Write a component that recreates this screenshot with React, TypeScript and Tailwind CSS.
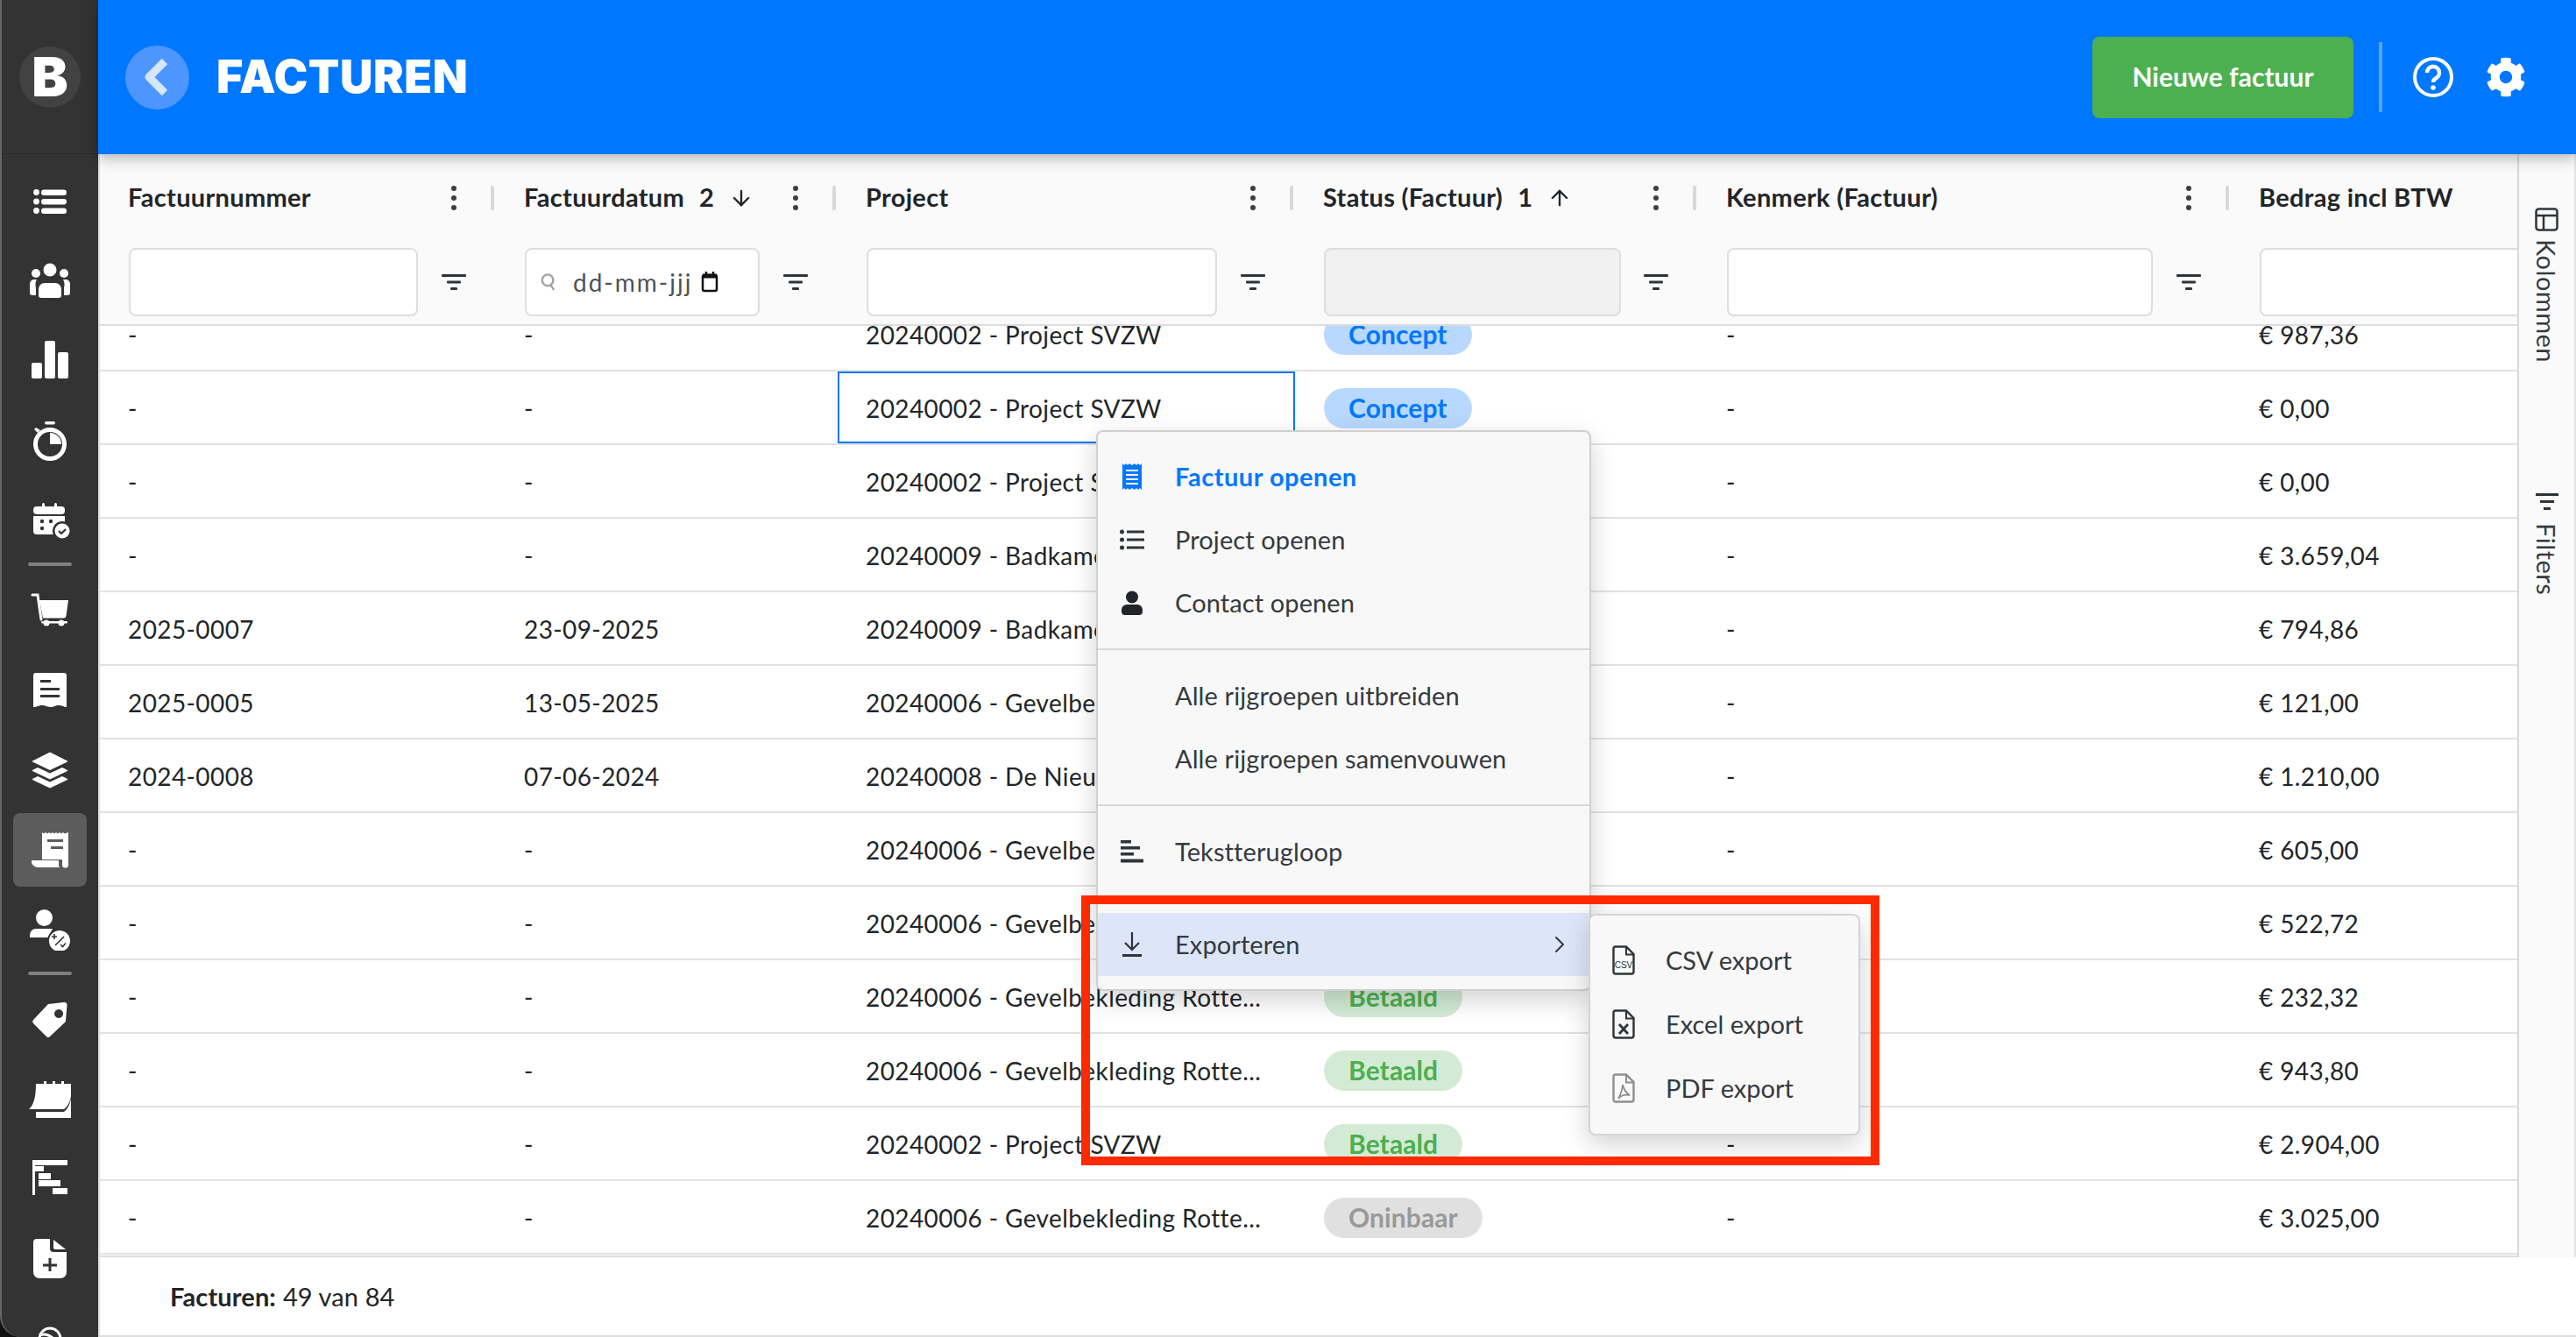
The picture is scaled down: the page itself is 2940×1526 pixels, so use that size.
import { ArrowDown, ChevronRight } from "lucide-react";
import { FaCog } from "react-icons/fa";
import type { ReactNode } from "react";

const DARK = "#333333";

// Sidebar icons, all on the same 48 box
const SideSvg = ({ children }: { children: ReactNode }) => (
  <svg viewBox="0 0 48 48" className="w-12 h-12" fill="#fff">
    {children}
  </svg>
);

const sideIcons: Record<string, ReactNode> = {
  list: (
    <>
      <circle cx="8.5" cy="13.5" r="3.4" />
      <circle cx="8.5" cy="24" r="3.4" />
      <circle cx="8.5" cy="34.5" r="3.4" />
      <rect x="14" y="10.5" width="29" height="6.5" rx="3.2" />
      <rect x="14" y="21" width="29" height="6.5" rx="3.2" />
      <rect x="14" y="31.5" width="29" height="6.5" rx="3.2" />
    </>
  ),
  people: (
    <>
      <circle cx="24" cy="11" r="7.5" />
      <circle cx="8" cy="15" r="5" />
      <circle cx="40" cy="15" r="5" />
      <path d="M11 40V33a7 7 0 0 1 7-7h12a7 7 0 0 1 7 7v7a3 3 0 0 1-3 3H14a3 3 0 0 1-3-3z" />
      <path d="M8 22H6a5 5 0 0 0-5 5v10a3 3 0 0 0 3 3h4V31a11 11 0 0 1 1-9z" />
      <path d="M40 22h2a5 5 0 0 1 5 5v10a3 3 0 0 1-3 3h-4V31a11 11 0 0 0-1-9z" />
    </>
  ),
  bars: (
    <>
      <rect x="3" y="26" width="12" height="18" rx="2" />
      <rect x="18" y="1" width="12" height="43" rx="2" />
      <rect x="33" y="14" width="12" height="30" rx="2" />
    </>
  ),
  timer: (
    <>
      <circle cx="24" cy="28" r="16.5" fill="none" stroke="#fff" strokeWidth="5" />
      <path d="M24 28V15a13 13 0 0 1 13 13z" />
      <rect x="18" y="2" width="12" height="3.5" rx="1.7" />
      <path d="M8 9l5 3-3 3-4-4z" />
    </>
  ),
  calendar: (
    <>
      <rect x="5" y="8" width="36" height="9" rx="4" />
      <path d="M5 19h36v21H9a4 4 0 0 1-4-4z" />
      <rect x="15" y="4" width="3" height="6" rx="1.5" />
      <rect x="29" y="4" width="3" height="6" rx="1.5" />
      <circle cx="15" cy="25" r="2.2" fill={DARK} />
      <circle cx="25" cy="25" r="2.2" fill={DARK} />
      <circle cx="15" cy="33" r="2.2" fill={DARK} />
      <circle cx="38" cy="36" r="11" fill={DARK} />
      <circle cx="38" cy="36" r="8.5" />
      <path d="M34 36l3 3 5-5" fill="none" stroke={DARK} strokeWidth="2.2" />
    </>
  ),
  cart: (
    <>
      <path d="M4 6h6l4 28" fill="none" stroke="#fff" strokeWidth="3" strokeLinecap="round" />
      <path d="M12 12h33l-2.500 18a3 3 0 0 1-3 2.500H16z" />
      <rect x="14" y="36" width="30" height="2.500" rx="1.200" />
      <circle cx="20" cy="38" r="3.500" />
      <circle cx="37" cy="38" r="3.500" />
    </>
  ),
  receipt: (
    <>
      <path d="M5 7a3 3 0 0 1 3-3h32a3 3 0 0 1 3 3v36c-3 0-5-2-9-2s-5 2-9 2-6-2-10-2-5 2-10 2z" />
      <rect x="13" y="12" width="12" height="3" fill={DARK} />
      <rect x="13" y="21" width="22" height="3" fill={DARK} />
      <rect x="13" y="29" width="22" height="3" fill={DARK} />
    </>
  ),
  layers: (
    <>
      <path d="M24 3.500l19 9.500a1 1 0 0 1 0 2l-19 9-19-9a1 1 0 0 1 0-2z" />
      <path d="M10 21l14 6.500L38 21l5 2.500a1 1 0 0 1 0 2L24 34.500l-19-9a1 1 0 0 1 0-2z" />
      <path d="M10 31l14 6.500L38 31l5 2.500a1 1 0 0 1 0 2L24 44.500l-19-9a1 1 0 0 1 0-2z" />
    </>
  ),
  invoice: (
    <>
      <path d="M15 4l2 1.500L19 4l2 1.500L23 4l2 1.500L27 4l2 1.500L31 4l2 1.500L35 4l2 1.500L39 4l2 1.500L45 4v37a3.500 3.500 0 0 1-7 0v-6H15z" />
      <rect x="21" y="12" width="18" height="3" fill="#5c5c5c" />
      <rect x="25" y="20" width="14" height="3" fill="#5c5c5c" />
      <path d="M3 36h31v6a4 4 0 0 0 1 2H10a7 7 0 0 1-7-8z" />
    </>
  ),
  user: (
    <>
      <circle cx="17.500" cy="10.500" r="9.500" />
      <path d="M1 33v-3a7 7 0 0 1 7-7h19l-5 10z" />
      <circle cx="35" cy="37" r="14" fill={DARK} />
      <circle cx="35" cy="37" r="12" />
      <path d="M26 32h6M29 29v6M30 42l10-10M36 41l2.500 2.500 3.500-4" fill="none" stroke={DARK} strokeWidth="1.600" />
    </>
  ),
  tag: (
    <path
      fillRule="evenodd"
      d="M22 6L40 4a3 3 0 0 1 3.500 3.500L42 25a3 3 0 0 1-1 2L24 43a3 3 0 0 1-4 0L5 28a3 3 0 0 1 0-4zM34 12a5 5 0 1 0 .1 0z"
    />
  ),
  peel: (
    <>
      <path d="M8 6H48V20C47 27 44 32 40 35H0C5 31 8 22 8 6z" />
      <path d="M48 23V45H8V38H40C44 35 47 29 48 23z" />
      <rect x="17" y="3" width="3" height="4" />
      <rect x="27" y="3" width="3" height="4" />
      <rect x="37" y="3" width="3" height="4" />
    </>
  ),
  gantt: (
    <>
      <rect x="4" y="2" width="40" height="6" />
      <rect x="4" y="2" width="3" height="40" />
      <rect x="7" y="9" width="10" height="6" />
      <rect x="11" y="17" width="14" height="7" />
      <rect x="11" y="25" width="25" height="7" />
      <rect x="27" y="34" width="17" height="7" />
    </>
  ),
  fileplus: (
    <>
      <path d="M9 1h15v11a4 4 0 0 0 4 4h15v23a7 7 0 0 1-7 7H12a7 7 0 0 1-7-7V5a4 4 0 0 1 4-4z" />
      <path d="M28 2l14 11H30a2 2 0 0 1-2-2z" />
      <path d="M24 23v15M16 31h16" stroke={DARK} strokeWidth="3" />
    </>
  ),
  swirl: (
    <g fill="none" stroke="#fff" strokeWidth="3">
      <circle cx="24" cy="24" r="12" />
      <path d="M12 20c8-3 17 1 20 12M14 29c5-2 10 0 12 6" />
    </g>
  ),
};

const SideItem = ({ name, active }: { name: string; active?: boolean }) => (
  <div className="h-[91px] flex items-center justify-center">
    <div className={`w-[84px] h-[84px] rounded-lg flex items-center justify-center ${active ? "bg-[#5c5c5c]" : ""}`}>
      <SideSvg>{sideIcons[name]}</SideSvg>
    </div>
  </div>
);

const SideSep = () => <div className="w-[50px] h-1 rounded-sm bg-[#808080] mx-auto mt-[3px] mb-[5px] shrink-0" />;

const Sidebar = () => (
  <aside className="w-[112px] shrink-0 h-full bg-[#333333] border-l-2 border-[#666] rounded-bl-[24px] flex flex-col overflow-hidden">
    <div className="h-[176px] shrink-0 flex items-center justify-center border-b border-[#2a2a2a]">
      <div className="w-[70px] h-[70px] rounded-full bg-[#424242] flex items-center justify-center text-white font-['Inter',sans-serif] font-black text-[62px] leading-none">
        B
      </div>
    </div>
    <div className="pt-[8px]">
      <SideItem name="list" />
      <SideItem name="people" />
      <SideItem name="bars" />
      <SideItem name="timer" />
      <SideItem name="calendar" />
      <SideSep />
      <SideItem name="cart" />
      <SideItem name="receipt" />
      <SideItem name="layers" />
      <SideItem name="invoice" active />
      <SideItem name="user" />
      <SideSep />
      <SideItem name="tag" />
      <SideItem name="peel" />
      <SideItem name="gantt" />
      <SideItem name="fileplus" />
      <SideItem name="swirl" />
    </div>
  </aside>
);

const Kebab = () => (
  <svg viewBox="0 0 8 28" className="w-2 h-7 shrink-0" fill="#3a3f44">
    <circle cx="4" cy="3" r="3" />
    <circle cx="4" cy="14" r="3" />
    <circle cx="4" cy="25" r="3" />
  </svg>
);

const FilterIcon = () => (
  <svg viewBox="0 0 28 18" className="w-7 h-[18px]" fill="#2f3438">
    <rect x="0" y="0" width="28" height="3" rx="1" />
    <rect x="6" y="7.500" width="16" height="3" rx="1" />
    <rect x="10" y="15" width="8" height="3" rx="1" />
  </svg>
);

type Col = {
  title: string;
  width: string;
  input: string;
  sort?: string;
  sortIcon?: "up" | "down";
  last?: boolean;
};

const columns: Col[] = [
  { title: "Factuurnummer", width: "w-[452px]", input: "w-[330px] bg-white" },
  { title: "Factuurdatum", width: "w-[390px]", input: "w-[268px] bg-white", sort: "2", sortIcon: "down" },
  { title: "Project", width: "w-[522px]", input: "w-[400px] bg-white" },
  { title: "Status (Factuur)", width: "w-[460px]", input: "w-[339px] bg-[#f0f1f0]", sort: "1", sortIcon: "up" },
  { title: "Kenmerk (Factuur)", width: "w-[608px]", input: "w-[486px] bg-white" },
  { title: "Bedrag incl BTW", width: "w-[327px]", input: "w-[400px] bg-white", last: true },
];

const HeaderCell = ({ col }: { col: Col }) => (
  <div className={`${col.width} shrink-0 flex flex-col`}>
    <div className="h-[100px] flex items-center pl-[32px]">
      <span className="font-bold text-[29px] text-[#212529] tracking-[0.3px] whitespace-nowrap pb-[3px]">{col.title}</span>
      {col.sort && <span className="font-bold text-[29px] text-[#212529] ml-[17px] pb-[3px]">{col.sort}</span>}
      {col.sortIcon === "down" && <ArrowDown className="w-7 h-7 ml-[17px] text-[#212529]" strokeWidth={2} />}
      {col.sortIcon === "up" && <ArrowDown className="w-7 h-7 ml-[17px] text-[#212529] rotate-180" strokeWidth={2} />}
      {!col.last && (
        <>
          <div className="ml-auto"><Kebab /></div>
          <div className="w-1 h-7 bg-[#d9d9d9] ml-[38px] mr-[2px]" />
        </>
      )}
    </div>
    <div className="h-[78px] mt-[7px] flex items-center pl-[33px] overflow-hidden">
      <div className={`${col.input} h-[78px] shrink-0 rounded-lg border-2 border-[#dedede] flex items-center pl-4`}>
        {col.title === "Factuurdatum" && (
          <>
            <svg viewBox="0 0 20 24" className="w-[18px] h-[22px] shrink-0" fill="none" stroke="#a0a0a0" strokeWidth="2.500">
              <circle cx="9" cy="9.500" r="7" />
              <path d="M13 16l4 6" />
            </svg>
            <span className="ml-[19px] text-[28px] text-[#4d5257] tracking-[2px] whitespace-nowrap">dd-mm-jjj</span>
            <svg viewBox="0 0 20 24" className="w-5 h-6 ml-[10px] shrink-0" fill="none" stroke="#111" strokeWidth="2.500">
              <rect x="2" y="4" width="16" height="18" rx="2" />
              <path d="M2 5h16" strokeWidth="5" />
              <path d="M6 0v4M14 0v4" />
            </svg>
          </>
        )}
      </div>
      {!col.last && (
        <div className="ml-auto mr-[34px]"><FilterIcon /></div>
      )}
    </div>
  </div>
);

const pillStyles: Record<string, string> = {
  Concept: "bg-[#b8d8ff] text-[#0077ff]",
  Betaald: "bg-[#d3ebd5] text-[#4caf50]",
  Oninbaar: "bg-[#e0e0e0] text-[#999999]",
};

const rows = [
  ["-", "-", "20240002 - Project SVZW", "Concept", "-", "€ 987,36"],
  ["-", "-", "20240002 - Project SVZW", "Concept", "-", "€ 0,00"],
  ["-", "-", "20240002 - Project SVZW", "Concept", "-", "€ 0,00"],
  ["-", "-", "20240009 - Badkamer Zuid", "Concept", "-", "€ 3.659,04"],
  ["2025-0007", "23-09-2025", "20240009 - Badkamer Zuid", "Betaald", "-", "€ 794,86"],
  ["2025-0005", "13-05-2025", "20240006 - Gevelbekleding Rotte...", "Betaald", "-", "€ 121,00"],
  ["2024-0008", "07-06-2024", "20240008 - De Nieuwe Haven", "Betaald", "-", "€ 1.210,00"],
  ["-", "-", "20240006 - Gevelbekleding Rotte...", "Betaald", "-", "€ 605,00"],
  ["-", "-", "20240006 - Gevelbekleding Rotte...", "Betaald", "-", "€ 522,72"],
  ["-", "-", "20240006 - Gevelbekleding Rotte...", "Betaald", "-", "€ 232,32"],
  ["-", "-", "20240006 - Gevelbekleding Rotte...", "Betaald", "-", "€ 943,80"],
  ["-", "-", "20240002 - Project SVZW", "Betaald", "-", "€ 2.904,00"],
  ["-", "-", "20240006 - Gevelbekleding Rotte...", "Oninbaar", "-", "€ 3.025,00"],
];

const Row = ({ cells, selected }: { cells: string[]; selected?: boolean }) => (
  <div className="h-[84px] shrink-0 flex border-b-2 border-[#e2e2e2] bg-white text-[28px] tracking-[0.4px] text-[#212529]">
    {cells.map((cell, i) => (
      <div
        key={i}
        className={`${columns[i].width} shrink-0 flex items-center whitespace-nowrap ${
          selected && i === 2 ? "border-2 border-[#0077ff] pl-[30px]" : "pl-[32px]"
        }`}
      >
        {i === 3 ? (
          <span className={`h-[46px] mt-[1px] ml-[1px] flex items-center px-[28px] rounded-full font-bold text-[30px] tracking-[0.1px] ${pillStyles[cell]}`}>{cell}</span>
        ) : (
          <span className="pt-[2px]">{cell}</span>
        )}
      </div>
    ))}
  </div>
);

const MenuItem = ({ icon, label, active, highlight, right }: { icon?: ReactNode; label: string; active?: boolean; highlight?: boolean; right?: ReactNode }) => (
  <div className={`h-[72px] flex items-center ${highlight ? "bg-[#dce6f8]" : ""}`}>
    <div className="w-[78px] mr-[10px] flex items-center justify-center shrink-0">{icon}</div>
    <span className={`text-[29px] ${active ? "font-bold text-[#0077ff] tracking-[0.5px]" : "text-[#343a40] tracking-[0.1px]"}`}>{label}</span>
    {right && <div className="ml-auto mr-[18px]">{right}</div>}
  </div>
);

const Divider = () => <div className="h-[2px] bg-[#d9d9d9] my-4" />;

const FileIcon = ({ children, color = "#2f3438" }: { children: ReactNode; color?: string }) => (
  <svg viewBox="0 0 26 34" className="w-[26px] h-[34px]" fill="none" stroke={color} strokeWidth="2.400">
    <path d="M3.500 1.500h12.500L24.500 10v20a2.500 2.500 0 0 1-2.500 2.500H4A2.500 2.500 0 0 1 1.500 30V3.500a2 2 0 0 1 2-2z" />
    <path d="M16 2v8.500h8" strokeWidth="2" />
    {children}
  </svg>
);

const ContextMenu = () => (
  <div className="absolute left-[1251px] top-[491px] w-[565px] h-[640px] z-20 rounded-lg border-2 border-[#cfcfcf] bg-[#f8f8f8] shadow-[0_10px_30px_rgba(0,0,0,0.18)] pt-[15px]">
    <MenuItem
      active
      label="Factuur openen"
      icon={
        <svg viewBox="0 0 22 30" className="w-[22px] h-[30px]" fill="#0077ff">
          <path d="M0 0l2 2 2-2 2 2 2-2 3 2 3-2 2 2 2-2 2 2 2-2v30l-2-2-2 2-2-2-2 2-3-2-3 2-2-2-2 2-2-2-2 2z" />
          <path d="M4 8h14M4 13h14M4 18h14M4 23h14" stroke="#f8f8f8" strokeWidth="2" />
        </svg>
      }
    />
    <MenuItem
      label="Project openen"
      icon={
        <svg viewBox="0 0 28 24" className="w-7 h-6" fill="#2f3438">
          <circle cx="2.500" cy="3" r="2.500" />
          <circle cx="2.500" cy="12" r="2.500" />
          <circle cx="2.500" cy="21" r="2.500" />
          <rect x="8" y="1.500" width="20" height="3" />
          <rect x="8" y="10.500" width="20" height="3" />
          <rect x="8" y="19.500" width="20" height="3" />
        </svg>
      }
    />
    <MenuItem
      label="Contact openen"
      icon={
        <svg viewBox="0 0 24 28" className="w-6 h-7" fill="#212529">
          <circle cx="12" cy="7.500" r="7" />
          <path d="M0 24v-2a6 6 0 0 1 6-6h12a6 6 0 0 1 6 6v2a4 4 0 0 1-4 4H4a4 4 0 0 1-4-4z" />
        </svg>
      }
    />
    <Divider />
    <MenuItem label="Alle rijgroepen uitbreiden" />
    <MenuItem label="Alle rijgroepen samenvouwen" />
    <Divider />
    <MenuItem
      label="Tekstterugloop"
      icon={
        <svg viewBox="0 0 26 26" className="w-[26px] h-[26px]" fill="#2f3438">
          <rect x="0" y="0" width="12" height="3.500" />
          <rect x="0" y="7" width="22" height="3.500" />
          <rect x="0" y="14" width="15" height="3.500" />
          <rect x="0" y="21.500" width="26" height="4" />
        </svg>
      }
    />
    <Divider />
    <MenuItem
      highlight
      label="Exporteren"
      icon={
        <svg viewBox="0 0 22 28" className="w-[22px] h-7" fill="none" stroke="#2f3438" strokeWidth="2.200">
          <path d="M11 0v20M3 12l8 8 8-8" />
          <path d="M0 26.500h22" strokeWidth="3" />
        </svg>
      }
      right={<ChevronRight className="w-8 h-8 text-[#343a40]" strokeWidth={1.5} />}
    />
  </div>
);

const SubMenu = () => (
  <div className="absolute left-[1813px] top-[1043px] w-[310px] h-[253px] z-30 rounded-lg border-2 border-[#d4d4d4] bg-[#f8f8f8] shadow-[0_10px_30px_rgba(0,0,0,0.18)] pt-[14px] flex flex-col">
    {[
      {
        label: "CSV export",
        icon: (
          <FileIcon>
            <text x="13" y="26" textAnchor="middle" fontSize="10" fontFamily="Liberation Sans" fill="#2f3438" stroke="none">CSV</text>
          </FileIcon>
        ),
      },
      {
        label: "Excel export",
        icon: (
          <FileIcon>
            <path d="M8 17l10 11M18 17L8 28" strokeWidth="2.800" />
          </FileIcon>
        ),
      },
      {
        label: "PDF export",
        icon: (
          <FileIcon color="#8f8f8f">
            <path d="M12 13c1 5 3 9 8 12-6-1-10 0-13 4 2-4 5-10 5-16z" strokeWidth="1.800" />
          </FileIcon>
        ),
      },
    ].map((item) => (
      <div key={item.label} className="h-[73px] flex items-center pl-[25px]">
        {item.icon}
        <span className="ml-[35px] text-[29px] text-[#343a40]">{item.label}</span>
      </div>
    ))}
  </div>
);

export default function App() {
  return (
    <div className="relative w-[2940px] h-[1526px] flex overflow-hidden bg-[#111] font-['Lato',sans-serif]">
      <Sidebar />

      <main className="flex-1 min-w-0 h-full flex flex-col bg-white border-l-2 border-[#dedede]">
        {/* top bar */}
        <header className="relative z-10 h-[176px] shrink-0 bg-[#0077ff] flex items-center shadow-[0_4px_16px_rgba(0,0,0,0.3)] -ml-[2px] pl-[31px]">
          <div className="w-[73px] h-[73px] rounded-full bg-[#4d95ff] flex items-center justify-center shrink-0">
            <svg viewBox="0 0 30 44" className="w-[30px] h-[44px] -ml-1" fill="none" stroke="#d6e6ff" strokeWidth="9" strokeLinejoin="round">
              <path d="M25 4L7 22l18 18" />
            </svg>
          </div>
          <h1 className="ml-[31px] text-white font-['Inter',sans-serif] font-black text-[52px] leading-none tracking-[0.5px]">FACTUREN</h1>

          <button className="ml-auto w-[298px] h-[93px] pb-[2px] rounded-lg bg-[#4caf50] text-white text-[30px] font-bold">
            Nieuwe factuur
          </button>
          <div className="w-1 h-20 bg-[#5aa2ff] ml-[29px]" />
          <svg viewBox="0 0 46 46" className="w-[46px] h-[46px] ml-[35px]" fill="none" stroke="#fff" strokeWidth="4">
            <circle cx="23" cy="23" r="21" />
            <path d="M16 18a7 7 0 1 1 10.500 6c-2.500 1.500-3.500 2.500-3.500 5" strokeWidth="4.500" />
            <circle cx="23" cy="35" r="2.800" fill="#fff" stroke="none" />
          </svg>
          <FaCog className="w-[46px] h-[46px] text-white ml-[37px] mr-[57px]" />
        </header>

        <div className="flex-1 min-h-0 flex">
          <div className="flex-1 min-w-0 flex flex-col">
            {/* column titles and filters */}
            <div className="relative z-[1] h-[196px] shrink-0 flex bg-[#fafafa] border-b-2 border-[#dcdcdc] overflow-hidden">
              {columns.map((col) => (
                <HeaderCell key={col.title} col={col} />
              ))}
            </div>
            {/* the list is scrolled a bit, first row is cut by the header */}
            <div className="flex-1 min-h-0 overflow-hidden border-b-2 border-[#dcdcdc]">
              <div className="-mt-[32px] flex flex-col">
                {rows.map((cells, i) => (
                  <Row key={i} cells={cells} selected={i === 1} />
                ))}
              </div>
            </div>
          </div>

          {/* side tabs */}
          <div className="w-[67px] shrink-0 bg-[#fafafa] border-l-2 border-[#d9d9d9] border-r-2 border-r-[#e4e4e4] flex flex-col items-center pt-[61px] text-[29px] tracking-[0.5px] text-[#343a40]">
            <svg viewBox="0 0 27 27" className="w-[27px] h-[27px]" fill="none" stroke="#2f3438" strokeWidth="2.500">
              <rect x="1.500" y="1.500" width="24" height="24" rx="3" />
              <path d="M1.500 9h24M10 9v16" />
            </svg>
            <span className="[writing-mode:vertical-rl] mt-[9px] leading-none">Kolommen</span>
            <svg viewBox="0 0 26 19" className="w-[26px] h-[19px] mt-[149px]" fill="#2f3438">
              <rect x="0" y="0" width="26" height="3" />
              <rect x="5" y="8" width="16" height="3" />
              <rect x="9" y="16" width="8" height="3" />
            </svg>
            <span className="[writing-mode:vertical-rl] mt-[15px] leading-none">Filters</span>
          </div>
        </div>

        <footer className="h-[91px] shrink-0 flex items-center pl-[80px] text-[29px] tracking-[0.1px] text-[#212529] border-b-2 border-[#dedede]">
          <span className="font-bold mr-2">Facturen:</span>49 van 84
        </footer>
      </main>

      <ContextMenu />
      <SubMenu />

      {/* annotation box */}
      <div className="absolute left-[1234px] top-[1022px] w-[911px] h-[308px] z-40 border-[10px] border-[#ff2a00]" />
    </div>
  );
}
